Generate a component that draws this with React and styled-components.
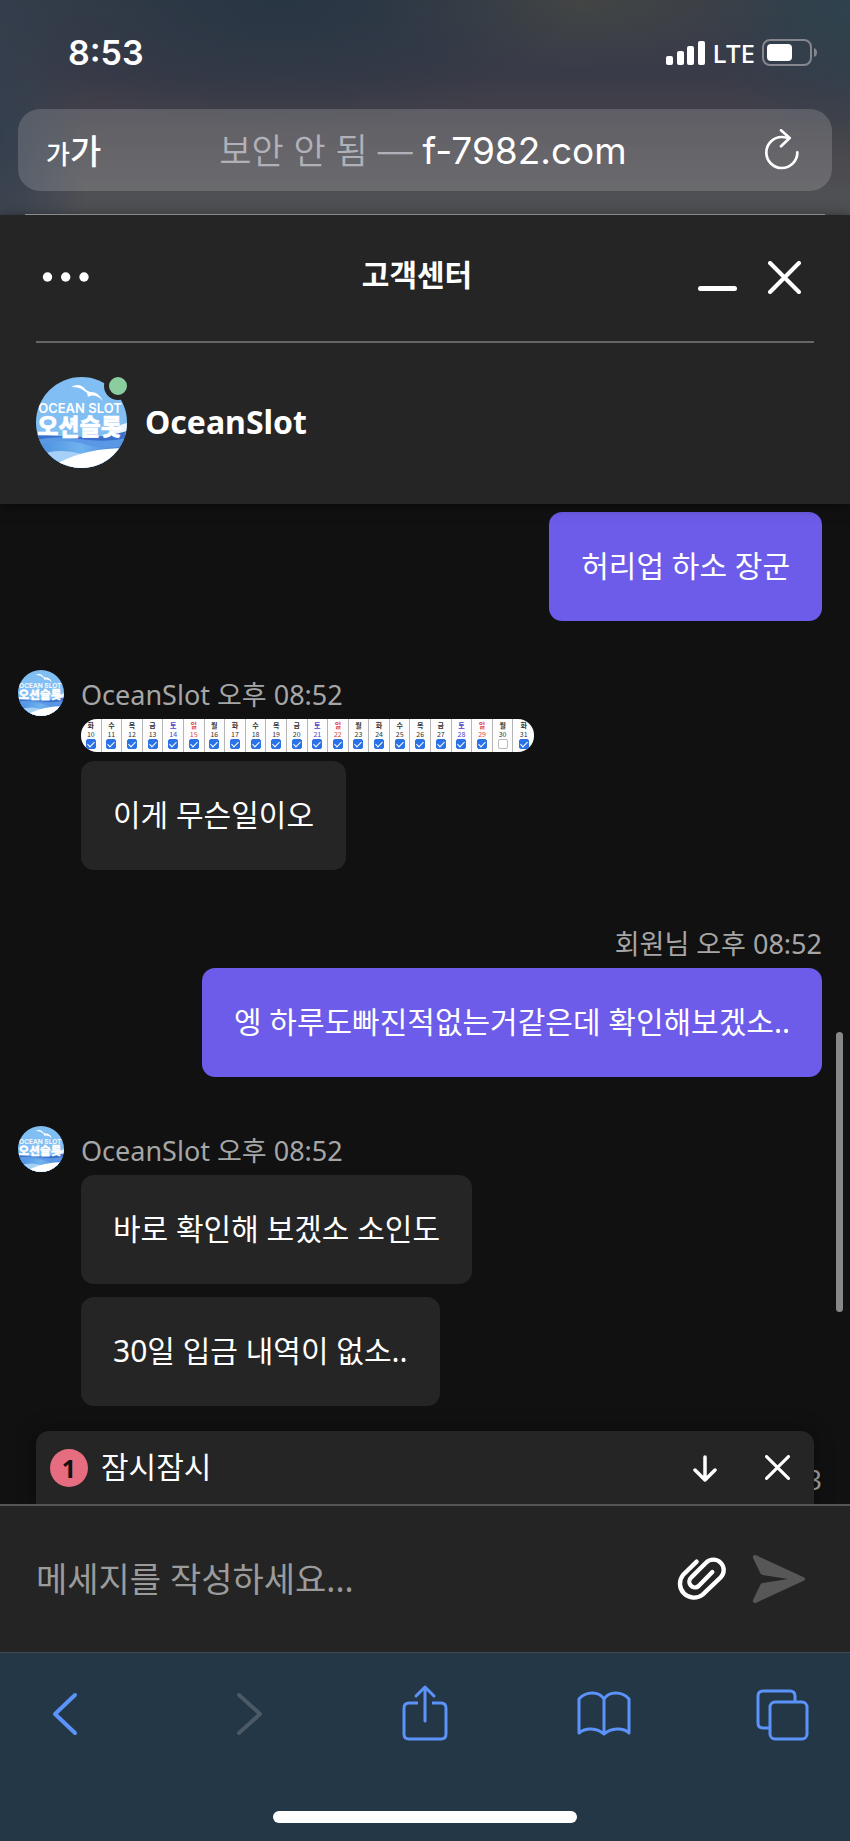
import React, { useState } from 'react'
import styled, { createGlobalStyle } from 'styled-components'

const GlobalStyle = createGlobalStyle`
    * {
        box-sizing: border-box;
    }

    body {
        margin: 0;
        background-color: #111111;
        color: #ffffff;
        font-family: 'Noto Sans', 'Noto Sans CJK KR', sans-serif;
    }

    button {
        padding: 0;
        border: none;
        background: none;
        color: inherit;
        font: inherit;
        cursor: pointer;
    }

    svg {
        display: block;
    }
`

const Phone = styled.div`
    height: 100vh;
    display: flex;
    flex-direction: column;
`

const BrowserTop = styled.div`
    display: flex;
    flex-direction: column;
    font-family: Inter, 'Noto Sans CJK KR', sans-serif;
    background:
        radial-gradient(ellipse 300px 130px at 33% 0, #283543 0%, transparent 100%),
        radial-gradient(ellipse 220px 70px at 68% 0, #434544 0%, transparent 100%),
        radial-gradient(ellipse 150px 150px at 100% 0, #2e424d 0%, transparent 100%),
        radial-gradient(ellipse 90px 260px at 0 60%, #343f4e 0%, transparent 100%),
        linear-gradient(#363d49 0%, #3a3b48 35%, #434149 55%, #4f5053 90%);
`

const StatusBar = styled.div`
    height: 105px;
    padding: 0 31px 0 68px;
    display: flex;
    align-items: center;
    justify-content: space-between;
`

const Time = styled.span`
    font-size: 34px;
    font-weight: 600;
`

const StatusIcons = styled.div`
    display: flex;
    align-items: center;
    gap: 7px;
`

const Network = styled.span`
    font-family: 'Noto Sans', sans-serif;
    font-size: 26px;
    font-weight: 500;
    line-height: 32px;
`

const AddressBar = styled.div`
    height: 82px;
    margin: 4px 18px 22px;
    padding: 0 32px 0 28px;
    border-radius: 22px;
    background-color: rgba(255, 255, 255, 0.16);
    display: grid;
    grid-template-columns: 1fr auto 1fr;
    align-items: center;
`

const TextSize = styled.button`
    justify-self: start;
    padding-bottom: 2px;
    font-size: 34px;
    font-weight: 500;
`

const SmallLetter = styled.span`
    font-size: 26px;
`

const Address = styled.button`
    padding-bottom: 4px;
    font-size: 37px;
    white-space: nowrap;
`

const Insecure = styled.span`
    color: #b1b1ba;
    font-size: 35px;
    font-weight: 350;
`

const Reload = styled.button`
    justify-self: end;
`

const TopLine = styled.div`
    height: 2px;
    margin: 0 25px;
    border-bottom: 1px solid #a9a9a9;
`

const ChatHeader = styled.header`
    padding: 0 36px;
    background-color: #252525;
    z-index: 1;
    box-shadow: 0 2px 12px rgba(0, 0, 0, 0.5);
`

const TitleRow = styled.div`
    height: 128px;
    border-bottom: 2px solid #666666;
    display: grid;
    grid-template-columns: 1fr auto 1fr;
    align-items: center;
`

const Title = styled.h1`
    margin: 0;
    padding: 0 16px 6px 0;
    font-size: 30px;
    line-height: 40px;
    font-weight: 700;
`

const WindowButtons = styled.div`
    justify-self: end;
    padding: 0 13px 2px 0;
    display: flex;
    align-items: center;
    gap: 30px;
`

const Agent = styled.div`
    height: 161px;
    padding-bottom: 2px;
    display: flex;
    align-items: center;
    gap: 18px;
`

const AgentName = styled.h2`
    margin: 0;
    padding-bottom: 2px;
    font-size: 32px;
    line-height: 42px;
    font-weight: 700;
`

const AvatarWrap = styled.div`
    position: relative;
`

const OnlineDot = styled.span`
    position: absolute;
    top: -5px;
    right: -5px;
    width: 28px;
    height: 28px;
    border: 5px solid #252525;
    border-radius: 50%;
    background-color: #8ccd9f;
`

const Chat = styled.main`
    position: relative;
    flex: 1;
    min-height: 0;
    overflow: hidden;
    background-color: #111111;
`

const Messages = styled.div`
    padding: 8px 28px 0 18px;
    display: flex;
    flex-direction: column;
    gap: 49px;
`

const Group = styled.section`
    display: flex;
    flex-direction: column;
    align-items: ${props => props.$mine ? 'flex-end' : 'flex-start'};
`

const Meta = styled.div`
    height: 49px;
    display: flex;
    gap: 17px;
    color: #a6a6a6;
    font-size: 27px;
    line-height: 49px;
`

const Bubbles = styled.div`
    margin-left: ${props => props.$mine ? '0' : '63px'};
    display: flex;
    flex-direction: column;
    align-items: inherit;
    gap: ${props => props.$tight ? '9px' : '13px'};
`

const Bubble = styled.p`
    margin: 0;
    padding: 31px 32px 33px;
    border-radius: 13px;
    background-color: ${props => props.$mine ? '#6c5ce9' : '#252525'};
    font-size: 30px;
    line-height: 45px;
`

const Strip = styled.div`
    width: 453px;
    height: 33px;
    border-radius: 16px;
    overflow: hidden;
    background-color: #fdfdfd;
    display: grid;
    grid-template-columns: repeat(22, 1fr);
`

const Day = styled.label`
    display: flex;
    flex-direction: column;
    align-items: center;
    padding-top: 2px;
    border-right: 1px solid #b5b5b5;
    color: ${props => props.$color};
    font-family: 'Noto Sans CJK KR', sans-serif;
    font-size: 7px;
    line-height: 9px;

    &:last-child {
        border-right: none;
    }
`

const Weekday = styled.span`
    font-weight: 700;
`

const Tick = styled.input`
    appearance: none;
    flex: none;
    width: 10px;
    height: 10px;
    margin: 0;
    border: 1px solid #b9b9b9;
    border-radius: 2px;
    background-color: #ffffff;

    &:checked {
        border-color: #2b72e6;
        background-color: #2b72e6;
    }

    &:checked::after {
        content: '';
        display: block;
        width: 3px;
        height: 6px;
        margin: 0 auto;
        border: solid #ffffff;
        border-width: 0 1px 1px 0;
        transform: rotate(45deg);
    }
`

const ScrollThumb = styled.div`
    position: absolute;
    top: 52.8%;
    right: 7px;
    width: 7px;
    height: 28%;
    border-radius: 4px;
    background-color: #888888;
`

const Notice = styled.div`
    position: absolute;
    left: 36px;
    right: 36px;
    bottom: 0;
    height: 73px;
    padding: 0 24px 0 14px;
    border-radius: 13px 13px 0 0;
    background-color: #252525;
    box-shadow: 0 0 20px rgba(0, 0, 0, 0.4);
    display: flex;
    align-items: center;
    gap: 13px;
`

const Count = styled.span`
    width: 38px;
    height: 38px;
    border-radius: 50%;
    background-color: #e66c80;
    color: #111111;
    font-size: 25px;
    line-height: 38px;
    font-weight: 700;
    text-align: center;
`

const NoticeText = styled.span`
    flex: 1;
    padding-bottom: 2px;
    font-size: 30px;
    line-height: 45px;
`

const NoticeButtons = styled.div`
    display: flex;
    align-items: center;
    gap: 47px;
`

const Composer = styled.form`
    height: 148px;
    padding: 0 44px 0 36px;
    border-top: 2px solid #555555;
    background-color: #242424;
    display: flex;
    align-items: center;
    gap: 25px;
`

const MessageInput = styled.input`
    flex: 1;
    min-width: 0;
    height: 60px;
    padding: 0;
    border: none;
    outline: none;
    background: none;
    color: #ffffff;
    font: inherit;
    font-size: 34px;

    &::placeholder {
        color: #9b9b9b;
    }
`

const BrowserBottom = styled.nav`
    height: 189px;
    padding: 28px 36px 18px;
    border-top: 1px solid #3f4b55;
    background-color: #243746;
    color: #5b93fb;
    display: flex;
    flex-direction: column;
    justify-content: space-between;
`

const Tabs = styled.div`
    display: flex;
    justify-content: space-between;
`

const HomeIndicator = styled.div`
    align-self: center;
    width: 39%;
    height: 12px;
    border-radius: 6px;
    background-color: #ffffff;
`

const weekdays = ['일', '월', '화', '수', '목', '금', '토']

const days = Array.from({ length: 22 }, (_, i) => ({
    date: i + 10,
    weekday: (i + 2) % 7,
}))

function dayColor(weekday) {
    if (weekday === 0) return '#e04545'
    if (weekday === 6) return '#4a3fd0'
    return '#333333'
}

function Avatar({ id, size }) {
    return (
        <svg width={size} height={size} viewBox='0 0 91 91' role='img' aria-label='OceanSlot'>
            <defs>
                <clipPath id={`${id}-clip`}><circle cx='45.5' cy='45.5' r='45.5' /></clipPath>
                <linearGradient id={`${id}-wave`} x1='0' x2='1' y1='0' y2='0'>
                    <stop offset='0' stopColor='#4a8ee0' />
                    <stop offset='0.5' stopColor='#6fb3ee' />
                    <stop offset='1' stopColor='#3f78d6' />
                </linearGradient>
            </defs>
            <g clipPath={`url(#${id}-clip)`}>
                <rect width='91' height='91' fill='#80bef3' />
                <path d='M91 46 Q82 48 76 55 L91 60 Z' fill='#eef6fd' />
                <path d='M0 57 Q25 60 50 60 Q72 60 91 54 V91 H0 Z' fill='#3b6fcb' />
                <path d='M0 63 Q20 58 44 62 Q70 66 91 61 V91 H0 Z' fill='#5a98e6' />
                <path d='M0 69 Q22 61 44 66 Q68 74 91 68 V91 H0 Z' fill={`url(#${id}-wave)`} />
                <path d='M0 79 Q22 70 46 77 L70 91 H0 Z' fill='#a6d0f8' />
                <path d='M22 86 Q50 71 91 71 V91 H22 Z' fill='#ffffff' />
                <path d='M35 10 Q44 5 50 13 L54 15 Q62 14 67 24 Q60 17 54 19 L52 20 L51 16 Q44 9 35 10 Z' fill='#ffffff' />
                <text fill='#ffffff' textAnchor='middle'>
                    <tspan x='44' y='36' fontFamily='Inter, sans-serif' fontWeight='600' fontSize='13'>OCEAN SLOT</tspan>
                    <tspan x='43.5' y='58' fontFamily='Noto Sans CJK KR, sans-serif' fontWeight='900' fontSize='23' stroke='#ffffff' strokeWidth='0.5'>오션슬롯</tspan>
                </text>
            </g>
        </svg>
    )
}

function Cross({ size, width }) {
    return (
        <svg width={size} height={size} viewBox='0 0 32 32' fill='none' stroke='currentColor' strokeWidth={width} strokeLinecap='round'>
            <path d='M2 2 L30 30 M30 2 L2 30' />
        </svg>
    )
}

function TabButton({ label, disabled, children }) {
    return (
        <button type='button' aria-label={label} disabled={disabled}>
            <svg width='64' height='64' viewBox='0 0 64 64' fill='none' stroke={disabled ? '#4b5a64' : '#5b93fb'} strokeWidth='3' strokeLinecap='round' strokeLinejoin='round'>
                {children}
            </svg>
        </button>
    )
}

function Calendar() {
    return (
        <Strip>
            {days.map(day => (
                <Day key={day.date} $color={dayColor(day.weekday)}>
                    <Weekday>{weekdays[day.weekday]}</Weekday>
                    <span>{day.date}</span>
                    <Tick type='checkbox' defaultChecked={day.date !== 30} />
                </Day>
            ))}
        </Strip>
    )
}

export default function App() {

    const [text, setText] = useState('')

    return (
        <Phone>
            <GlobalStyle />
            <BrowserTop>
                <StatusBar>
                    <Time>8:53</Time>
                    <StatusIcons>
                        <svg width='40' height='26' viewBox='0 0 40 26' fill='#ffffff'>
                            <rect x='0' y='16' width='7' height='9' rx='2' />
                            <rect x='11' y='11' width='7' height='14' rx='2' />
                            <rect x='21' y='6' width='7' height='19' rx='2' />
                            <rect x='32' y='1' width='7' height='24' rx='2' />
                        </svg>
                        <Network>LTE</Network>
                        <svg width='57' height='27' viewBox='0 0 57 27'>
                            <rect x='1' y='1' width='48' height='25' rx='7' fill='none' stroke='#86868e' strokeWidth='2' />
                            <rect x='5' y='5' width='25' height='17' rx='4' fill='#ffffff' />
                            <path d='M52 9 Q55 10 55 13.500 Q55 17 52 18 Z' fill='#86868e' />
                        </svg>
                    </StatusIcons>
                </StatusBar>
                <AddressBar>
                    <TextSize type='button'><SmallLetter>가</SmallLetter>가</TextSize>
                    <Address type='button'><Insecure>보안 안 됨 — </Insecure>f-7982.com</Address>
                    <Reload type='button' aria-label='새로고침'>
                        <svg width='36' height='42' viewBox='1017 385 108 126' fill='none' stroke='#ffffff' strokeWidth='8' strokeLinecap='round' strokeLinejoin='round'>
                            <path d='M1117 455 A46.500 46.500 0 1 1 1071 409 L1093 412' />
                            <path d='M1068 389 L1094 412 L1068 437' />
                        </svg>
                    </Reload>
                </AddressBar>
                <TopLine />
            </BrowserTop>

            <ChatHeader>
                <TitleRow>
                    <div>
                        <button type='button' aria-label='메뉴'>
                            <svg width='60' height='30' viewBox='0 0 60 30' fill='#ffffff'>
                                <circle cx='11.500' cy='16' r='4.700' />
                                <circle cx='29.700' cy='16' r='4.700' />
                                <circle cx='48' cy='16' r='4.700' />
                            </svg>
                        </button>
                    </div>
                    <Title>고객센터</Title>
                    <WindowButtons>
                        <button type='button' aria-label='최소화'>
                            <svg width='40' height='32' viewBox='0 0 40 32'>
                                <rect x='0' y='25' width='39' height='5' rx='2.500' fill='#ffffff' />
                            </svg>
                        </button>
                        <button type='button' aria-label='닫기'><Cross size={33} width={4} /></button>
                    </WindowButtons>
                </TitleRow>
                <Agent>
                    <AvatarWrap>
                        <Avatar id='agent' size={91} />
                        <OnlineDot />
                    </AvatarWrap>
                    <AgentName>OceanSlot</AgentName>
                </Agent>
            </ChatHeader>

            <Chat>
                <Messages>
                    <Group $mine>
                        <Bubbles $mine>
                            <Bubble $mine>허리업 하소 장군</Bubble>
                        </Bubbles>
                    </Group>
                    <Group>
                        <Meta>
                            <Avatar id='first' size={46} />
                            <span>OceanSlot 오후 08:52</span>
                        </Meta>
                        <Bubbles $tight>
                            <Calendar />
                            <Bubble>이게 무슨일이오</Bubble>
                        </Bubbles>
                    </Group>
                    <Group $mine>
                        <Meta>회원님 오후 08:52</Meta>
                        <Bubbles $mine>
                            <Bubble $mine>엥 하루도빠진적없는거같은데 확인해보겠소..</Bubble>
                        </Bubbles>
                    </Group>
                    <Group>
                        <Meta>
                            <Avatar id='second' size={46} />
                            <span>OceanSlot 오후 08:52</span>
                        </Meta>
                        <Bubbles>
                            <Bubble>바로 확인해 보겠소 소인도</Bubble>
                            <Bubble>30일 입금 내역이 없소..</Bubble>
                        </Bubbles>
                    </Group>
                    <Group $mine>
                        <Meta>회원님 오후 08:53</Meta>
                    </Group>
                </Messages>
                <ScrollThumb />
                <Notice>
                    <Count>1</Count>
                    <NoticeText>잠시잠시</NoticeText>
                    <NoticeButtons>
                        <button type='button' aria-label='아래로'>
                            <svg width='26' height='28' viewBox='0 0 26 28' fill='none' stroke='#ffffff' strokeWidth='3.500' strokeLinecap='round' strokeLinejoin='round'>
                                <path d='M13 3 V26 M3 16 L13 26 L23 16' />
                            </svg>
                        </button>
                        <button type='button' aria-label='알림 닫기'><Cross size={25} width={4} /></button>
                    </NoticeButtons>
                </Notice>
            </Chat>

            <Composer onSubmit={(e) => e.preventDefault()}>
                <MessageInput
                    aria-label='메세지'
                    value={text}
                    placeholder='메세지를 작성하세요...'
                    onChange={(e) => setText(e.target.value)}
                />
                <button type='button' aria-label='파일 첨부'>
                    <svg width='50' height='48' viewBox='757 436 150 144' fill='none' stroke='#ffffff' strokeWidth='13' strokeLinecap='round'>
                        <path d='M816 456 L775 496 A42 42 0 0 0 834 555 L888 503 A31 31 0 0 0 844 459 L800 503 A15.500 15.500 0 0 0 822 529 L863 487' />
                    </svg>
                </button>
                <button type='submit' aria-label='보내기'>
                    <svg width='54' height='50' viewBox='980 431 162 150' fill='#575757'>
                        <path d='M983 443 Q981 431 993 435 L1135 501 Q1144 506 1135 511 L993 577 Q981 581 983 569 L1005 523 Q1007 519 1012 518 L1088 506 L1012 494 Q1008 493 1006 490 Z' />
                    </svg>
                </button>
            </Composer>

            <BrowserBottom>
                <Tabs>
                    <TabButton label='뒤로'><path d='M39 14 L19 33 L39 52' strokeWidth='4' /></TabButton>
                    <TabButton label='앞으로' disabled><path d='M24 14 L45 33 L24 52' strokeWidth='4' /></TabButton>
                    <TabButton label='공유'>
                        <path d='M25 22 H16 Q11 22 11 27 V53 Q11 58 16 58 H48 Q53 58 53 53 V27 Q53 22 48 22 H39' strokeLinecap='butt' />
                        <path d='M32 40 V6 M23 15 L32 6 L41 15' />
                    </TabButton>
                    <TabButton label='책갈피'>
                        <path d='M32 18 C27 10 14 10 7 18 V52 C14 46 25 47 32 53 C39 47 51 46 57 52 V18 C50 10 37 10 32 18 Z M32 18 V53' />
                    </TabButton>
                    <TabButton label='탭'>
                        <rect x='20' y='21' width='37' height='37' rx='5' />
                        <path d='M19 47 H13 Q8 47 8 42 V15 Q8 10 13 10 H40 Q45 10 45 15 V20' />
                    </TabButton>
                </Tabs>
                <HomeIndicator />
            </BrowserBottom>
        </Phone>
    )
}
